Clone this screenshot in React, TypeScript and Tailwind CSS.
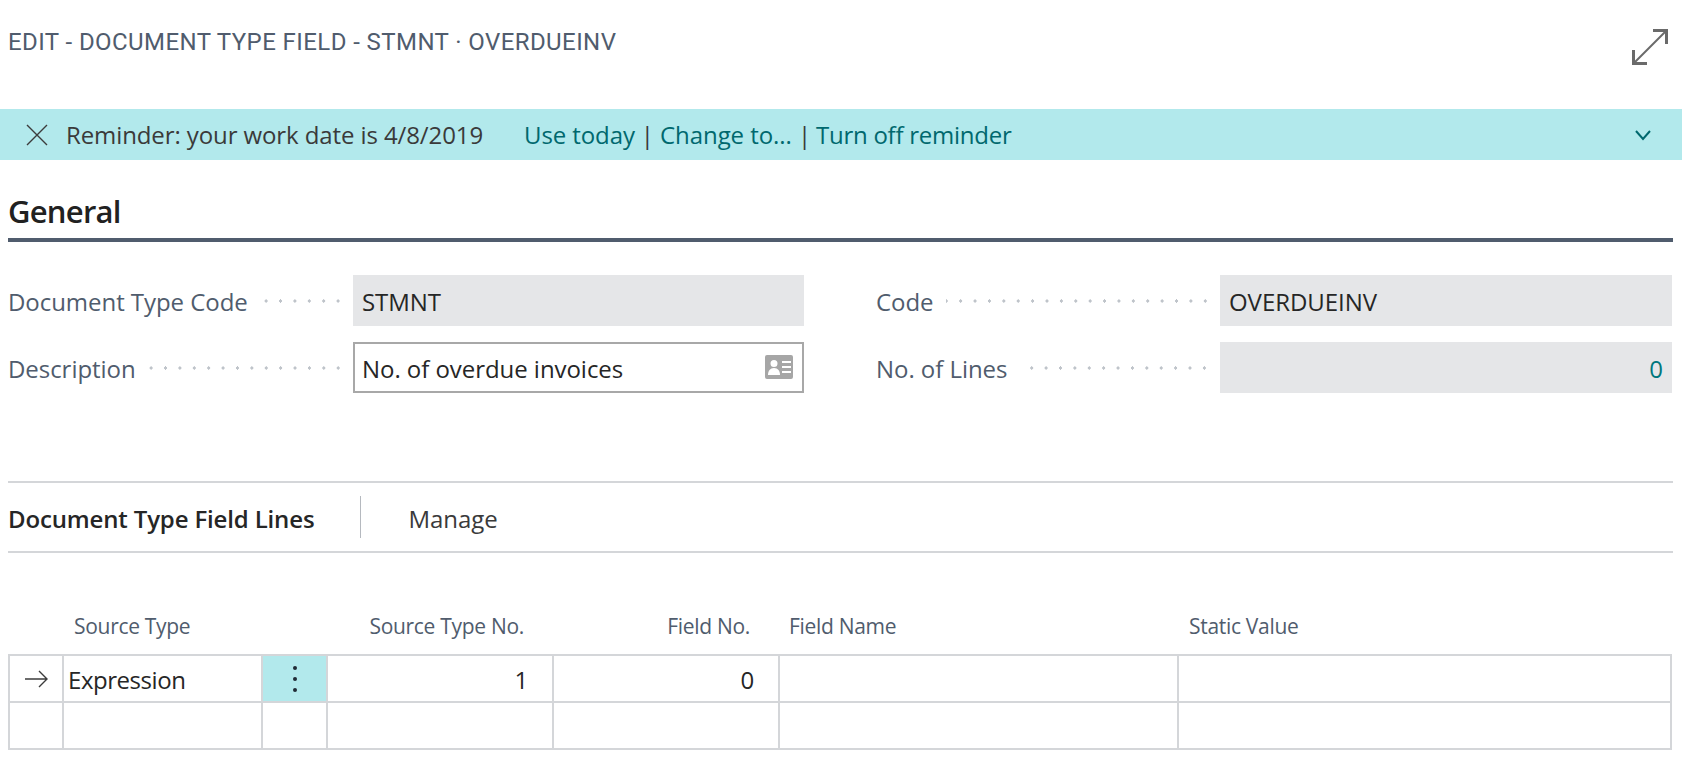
const sans = "font-['Open_Sans','Noto_Sans',sans-serif]";

function Leader() {
  return (
    <div className="ml-[12px] mr-[8px] h-[4px] flex-1 bg-[radial-gradient(circle,#bfc4ca_1.5px,transparent_1.6px)] bg-[length:14.4px_4px] bg-right bg-repeat-x" />
  );
}

function Field({ label, children }: { label: string; children: React.ReactNode }) {
  return (
    <div className="flex h-[51px] items-center">
      <label className="shrink-0 pt-[2px] text-[24px] tracking-[-0.05px] text-[#505c6d]">{label}</label>
      <Leader />
      {children}
    </div>
  );
}

function ReadOnly({ value, right, width }: { value: string; right?: boolean; width: string }) {
  return (
    <div
      className={`flex h-[51px] shrink-0 items-center bg-[#e5e6e8] px-[9px] pt-[2px] text-[24px] tracking-[-0.05px] ${width} ${
        right ? "justify-end text-[#00777d]" : "text-[#262626]"
      }`}
    >
      {value}
    </div>
  );
}

export default function App() {
  return (
    <div className={`h-[783px] w-[1682px] overflow-hidden bg-white ${sans}`}>
      <header className="flex h-[109px] items-start justify-between pl-[8px] pr-[13px]">
        <h1 className="mt-[26px] font-['Roboto',sans-serif] text-[24px] leading-[32px] tracking-[0.42px] text-[#505c6d]">
          EDIT - DOCUMENT TYPE FIELD - STMNT · OVERDUEINV
        </h1>
        <svg width="38" height="38" viewBox="0 0 38 38" className="mt-[28px]" fill="none" stroke="#6a6a6a">
          <path strokeWidth="2" d="M3 35 35 3" />
          <path strokeWidth="3" d="M22 2.5h13.5V16M2.5 22v13.500H16" />
        </svg>
      </header>

      <div className="flex h-[51px] items-center bg-[#b2e9ec] text-[24px] tracking-[-0.1px]">
        <svg width="22" height="22" viewBox="0 0 22 22" className="ml-[26px]" fill="none" stroke="#3c3c3c" strokeWidth="1.4">
          <path d="M1 1l20 20M21 1 1 21" />
        </svg>
        <span className="ml-[18px] text-[#3a3a3a]">Reminder: your work date is 4/8/2019</span>
        <a className="ml-[41px] text-[#00686e]">Use today</a>
        <span className="ml-[6px] text-[#3a3a3a]">|</span>
        <a className="ml-[6px] tracking-[-0.05px] text-[#00686e]">Change to...</a>
        <span className="ml-[6px] text-[#3a3a3a]">|</span>
        <a className="ml-[5px] tracking-[-0.25px] text-[#00686e]">Turn off reminder</a>
        <svg width="18" height="12" viewBox="0 0 18 12" className="ml-auto mr-[30px]" fill="none" stroke="#00686e" strokeWidth="2">
          <path d="M2 2l7 8 7-8" />
        </svg>
      </div>

      <section className="px-[8px] pr-[9px]">
        <h2 className="mt-[30px] h-[41px] text-[31px] font-semibold leading-[42px] tracking-[-0.75px] text-[#212121]">General</h2>
        <div className="mt-[7px] h-[4px] bg-[#505c6d]" />
        <div className="mt-[33px] grid grid-cols-[796px_796px] gap-x-[72px] gap-y-[16px]">
          <Field label="Document Type Code">
            <ReadOnly value="STMNT" width="w-[451px]" />
          </Field>
          <Field label="Code">
            <ReadOnly value="OVERDUEINV" width="w-[452px]" />
          </Field>
          <Field label="Description">
            <div className="flex h-[51px] w-[451px] shrink-0 items-center justify-between border-2 border-[#a8a8a8] pl-[7px] pr-[8px] pt-[2px] text-[24px] tracking-[-0.05px] text-[#262626]">
              No. of overdue invoices
              <svg width="30" height="26" viewBox="0 0 30 26" className="-mt-[4px]">
                <path fill="#a6a6a6" fillRule="evenodd" d="M3 1h24a2 2 0 0 1 2 2v20a2 2 0 0 1-2 2H3a2 2 0 0 1-2-2V3a2 2 0 0 1 2-2ZM10 6a3.5 3.5 0 1 0 0 7 3.5 3.5 0 0 0 0-7ZM4 21h12c0-4-2-7-6-7s-6 3-6 7ZM18 7v2h9V7h-9Zm0 5v2h9v-2h-9Zm0 5v2h9v-2h-9Z" />
              </svg>
            </div>
          </Field>
          <Field label="No. of Lines">
            <ReadOnly value="0" right width="w-[452px]" />
          </Field>
        </div>
      </section>

      <nav className="ml-[8px] mr-[9px] mt-[88px] flex h-[72px] items-center border-y-2 border-[#d4d6d9]">
        <strong className="pt-[3px] text-[24px] font-semibold tracking-[-0.15px] text-[#262626]">Document Type Field Lines</strong>
        <div className="ml-[46px] h-[42px] w-px bg-[#b5b9bf]" />
        <span className="ml-[47px] pt-[3px] text-[24px] tracking-[-0.05px] text-[#3a3a3a]">Manage</span>
      </nav>

      <table className="ml-[8px] mt-[50px] w-[1664px] table-fixed border-collapse text-[24px] tracking-[-0.1px] text-[#262626]">
        <colgroup>
          <col className="w-[54px]" />
          <col className="w-[199px]" />
          <col className="w-[65px]" />
          <col className="w-[226px]" />
          <col className="w-[226px]" />
          <col className="w-[399px]" />
          <col />
        </colgroup>
        <thead className="text-[21px] font-normal tracking-[-0.3px] text-[#505c6d]">
          <tr className="h-[52px]">
            <th />
            <th className="px-[11px] pb-[4px] text-left font-normal">Source Type</th>
            <th />
            <th className="pb-[4px] pr-[29px] text-right font-normal">Source Type No.</th>
            <th className="pb-[4px] pr-[29px] text-right font-normal">Field No.</th>
            <th className="px-[10px] pb-[4px] text-left font-normal">Field Name</th>
            <th className="px-[11px] pb-[4px] text-left font-normal">Static Value</th>
          </tr>
        </thead>
        <tbody>
          <tr className="h-[47px] [&>td]:border-2 [&>td]:border-[#d4d6d9]">
            <td className="text-center">
              <svg width="24" height="18" viewBox="0 0 24 18" className="mx-auto" fill="none" stroke="#3c3c3c" strokeWidth="1.4">
                <path d="M1 9h22M15 1l8 8-8 8" />
              </svg>
            </td>
            <td className="px-[4px] pt-[2px] tracking-[-0.45px]">Expression</td>
            <td className="bg-[#b2e9ec] text-center">
              <svg width="6" height="28" viewBox="0 0 6 28" className="mx-auto" fill="#212b36">
                <circle cx="3" cy="3" r="2" />
                <circle cx="3" cy="14" r="2" />
                <circle cx="3" cy="25" r="2" />
              </svg>
            </td>
            <td className="pr-[24px] pt-[2px] text-right">1</td>
            <td className="pr-[24px] pt-[2px] text-right">0</td>
            <td />
            <td />
          </tr>
          <tr className="h-[47px] [&>td]:border-2 [&>td]:border-[#d4d6d9]">
            <td />
            <td />
            <td />
            <td />
            <td />
            <td />
            <td />
          </tr>
        </tbody>
      </table>
    </div>
  );
}
